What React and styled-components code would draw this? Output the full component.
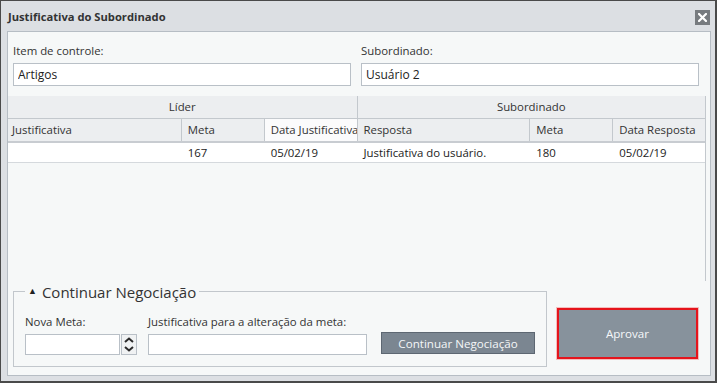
import React from "react";
import styled, { createGlobalStyle } from "styled-components";

const GlobalStyle = createGlobalStyle`
  html, body {
    margin: 0;
    padding: 0;
    background: #ffffff;
  }
  body {
    font-family: "Open Sans", "Liberation Sans", sans-serif;
    font-size: 11.4px;
    color: #222;
  }
  * {
    box-sizing: border-box;
  }
`;

const leader = [
  { label: "Justificativa", width: 174, value: "", first: true },
  { label: "Meta", width: 83, value: "167" },
  { label: "Data Justificativa", width: 93, value: "05/02/19", active: true },
];

const subordinate = [
  { label: "Resposta", width: 173, value: "Justificativa do usuário." },
  { label: "Meta", width: 83, value: "180" },
  { label: "Data Resposta", width: 92, value: "05/02/19" },
];

function CloseIcon() {
  return (
    <svg width="9" height="9" viewBox="0 0 9 9">
      <path d="M1 1 L8 8 M8 1 L1 8" stroke="#fff" strokeWidth="2.2" strokeLinecap="square" />
    </svg>
  );
}

function Chevron({ up }) {
  return (
    <svg width="10" height="6" viewBox="0 0 10 6">
      <path
        d={up ? "M1 5 L5 1.5 L9 5" : "M1 1 L5 4.5 L9 1"}
        fill="none"
        stroke="#2a2a2a"
        strokeWidth="2"
      />
    </svg>
  );
}

export default function App() {
  const columns = [...leader, ...subordinate];

  return (
    <>
      <GlobalStyle />
      <Window>
        <TitleBar>
          <Title>Justificativa do Subordinado</Title>
          <CloseButton>
            <CloseIcon />
          </CloseButton>
        </TitleBar>

        <Panel>
          <TopFields>
            <Field>
              <Label>Item de controle:</Label>
              <TextInput defaultValue="Artigos" />
            </Field>
            <Field>
              <Label>Subordinado:</Label>
              <TextInput defaultValue="Usuário 2" />
            </Field>
          </TopFields>

          <Grid>
            <Row>
              <GroupCell width={350} divider>
                Líder
              </GroupCell>
              <GroupCell width={348}>Subordinado</GroupCell>
            </Row>
            <HeaderRow>
              {columns.map((c, i) => (
                <HeaderCell
                  key={i}
                  width={c.width}
                  active={c.active}
                  first={c.first}
                  last={i === columns.length - 1}
                >
                  {c.label}
                </HeaderCell>
              ))}
            </HeaderRow>
            <DataRow>
              {columns.map((c, i) => (
                <DataCell key={i} width={c.width} first={c.first}>
                  {c.value}
                </DataCell>
              ))}
            </DataRow>
          </Grid>

          <BottomRow>
            <Negotiation>
              <Legend>
                <Caret>▲</Caret>
                Continuar Negociação
              </Legend>
              <NegotiationRow>
                <Field>
                  <Label>Nova Meta:</Label>
                  <SpinWrap>
                    <SpinInput />
                    <Spinner>
                      <SpinHalf>
                        <Chevron up />
                      </SpinHalf>
                      <SpinHalf>
                        <Chevron />
                      </SpinHalf>
                    </Spinner>
                  </SpinWrap>
                </Field>
                <Field>
                  <Label>Justificativa para a alteração da meta:</Label>
                  <SmallInput />
                </Field>
                <SecondaryButton>Continuar Negociação</SecondaryButton>
              </NegotiationRow>
            </Negotiation>

            <ApproveButton>Aprovar</ApproveButton>
          </BottomRow>
        </Panel>
      </Window>
    </>
  );
}

const Window = styled.div`
  width: 717px;
  height: 383px;
  display: flex;
  flex-direction: column;
  background: #dcdfe3;
  border: 1px solid #4a4a4a;
  border-right-width: 2px;
  border-bottom-width: 2px;
  padding: 0 4px 5px 6px;
`;

const TitleBar = styled.div`
  height: 30px;
  display: flex;
  align-items: center;
  justify-content: space-between;
  padding: 1px 1px 0 1px;
`;

const Title = styled.span`
  font-weight: 700;
  font-size: 11.2px;
  color: #333;
`;

const CloseButton = styled.div`
  width: 15px;
  height: 15px;
  margin-top: 1px;
  background: #777b7f;
  display: flex;
  align-items: center;
  justify-content: center;
`;

const Panel = styled.div`
  flex: 1;
  display: flex;
  flex-direction: column;
  background: #f6f8f8;
  border: 1px solid #b6bdc4;
`;

const TopFields = styled.div`
  display: grid;
  grid-template-columns: 338px 338px;
  column-gap: 10px;
  padding: 11px 0 0 5px;
`;

const Field = styled.div`
  display: flex;
  flex-direction: column;
`;

const Label = styled.label`
  height: 16px;
  line-height: 16px;
  margin-bottom: 4px;
  color: #333;
  white-space: nowrap;
`;

const TextInput = styled.input`
  height: 23px;
  width: 100%;
  border: 1px solid #b9c0c7;
  background: #fff;
  padding: 0 4px;
  font: inherit;
  font-size: 12px;
  color: #222;
  outline: none;
`;

const Grid = styled.div`
  flex: 1;
  width: 698px;
  margin-top: 10px;
  border-right: 1px solid #c3c8cd;
`;

const Row = styled.div`
  display: flex;
`;

const GroupCell = styled.div`
  width: ${(p) => p.width}px;
  height: 23px;
  line-height: 22px;
  text-align: center;
  background: #eceef0;
  border-bottom: 1px solid #c3c8cd;
  border-right: ${(p) => (p.divider ? "1px solid #c3c8cd" : "none")};
  color: #333;
`;

const HeaderRow = styled.div`
  display: flex;
  border-bottom: 2px solid #c8ccd1;
`;

const HeaderCell = styled.div`
  width: ${(p) => p.width}px;
  height: 22px;
  line-height: 21px;
  padding-left: ${(p) => (p.first ? 4 : 6)}px;
  background: ${(p) => (p.active ? "#fbfbfc" : "#eceef0")};
  border-right: ${(p) => (p.last ? "none" : "1px solid #c3c8cd")};
  color: #333;
  white-space: nowrap;
  overflow: hidden;
`;

const DataRow = styled.div`
  display: flex;
  background: #fff;
  border-bottom: 1px solid #d5d9dd;
`;

const DataCell = styled.div`
  width: ${(p) => p.width}px;
  height: 19px;
  line-height: 19px;
  padding-left: ${(p) => (p.first ? 4 : 6)}px;
  color: #222;
  white-space: nowrap;
`;

const BottomRow = styled.div`
  display: flex;
  align-items: flex-end;
  gap: 10px;
  padding: 0 12px 8px 5px;
`;

const Negotiation = styled.fieldset`
  flex-shrink: 0;
  width: 534px;
  margin: 0;
  border: 1px solid #c2c7cc;
  padding: 12px 10px 11px 11px;
`;

const Legend = styled.legend`
  padding: 0 3px;
  font-size: 15px;
  line-height: 20px;
  color: #333;
`;

const Caret = styled.span`
  display: inline-block;
  font-size: 9px;
  vertical-align: 4px;
  margin-right: 5px;
  color: #222;
`;

const NegotiationRow = styled.div`
  display: flex;
  align-items: flex-end;
  gap: 11px;
`;

const SpinWrap = styled.div`
  display: flex;
  gap: 1px;
`;

const SpinInput = styled.input`
  width: 95px;
  height: 21px;
  border: 1px solid #b9c0c7;
  background: #fff;
  outline: none;
`;

const Spinner = styled.div`
  width: 16px;
  height: 21px;
  display: flex;
  flex-direction: column;
  border: 1px solid #b9c0c7;
  background: #f0f2f3;
`;

const SpinHalf = styled.div`
  flex: 1;
  display: flex;
  align-items: center;
  justify-content: center;
`;

const SmallInput = styled.input`
  width: 219px;
  height: 21px;
  border: 1px solid #b9c0c7;
  background: #fff;
  outline: none;
`;

const SecondaryButton = styled.button`
  width: 154px;
  height: 22px;
  margin-left: 3px;
  margin-bottom: 1px;
  background: #7b8691;
  border: 1px solid #5d6772;
  color: #f4f6f8;
  font: inherit;
  font-size: 11.6px;
  padding: 0;
`;

const ApproveButton = styled.button`
  flex-shrink: 0;
  width: 141px;
  height: 51px;
  margin-bottom: 8px;
  background: #87929c;
  border: 2px solid #e5141c;
  box-shadow: 0 0 0 1px rgba(240, 80, 80, 0.35);
  color: #f6f8fa;
  font: inherit;
  font-size: 11.6px;
  padding: 0;
`;
